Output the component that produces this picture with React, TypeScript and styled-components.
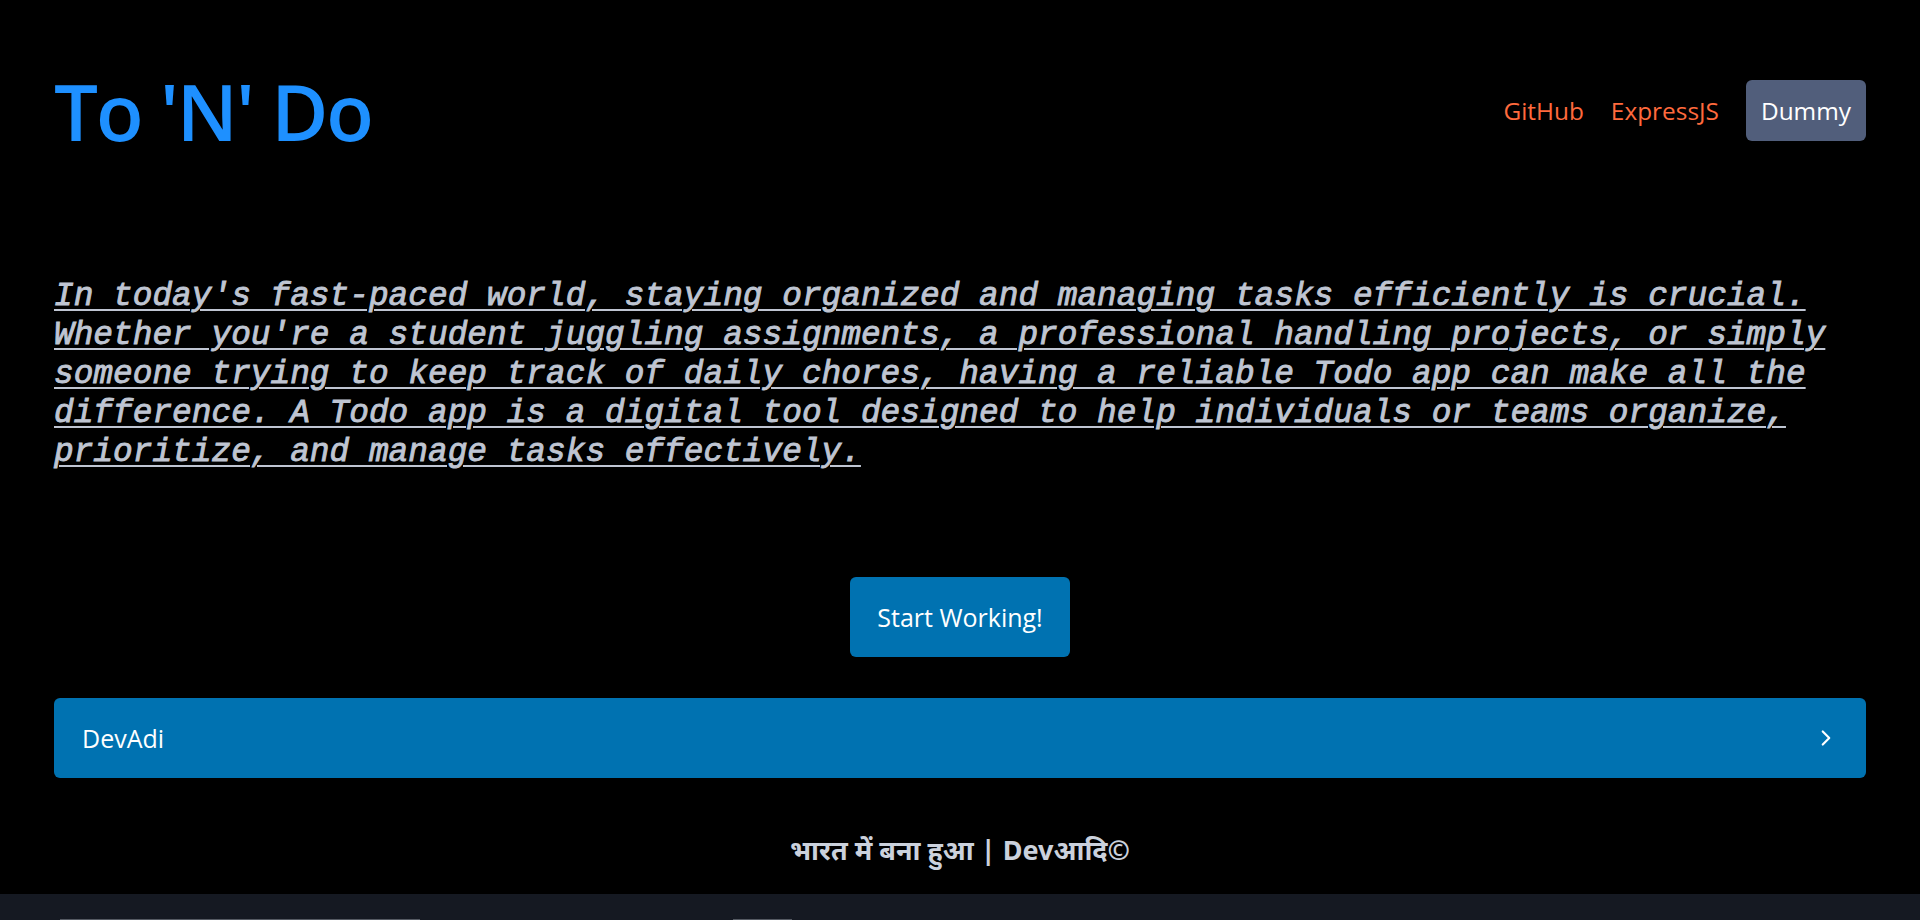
import React from 'react'
import styled, { createGlobalStyle } from 'styled-components'
import { ChevronRight } from 'lucide-react'

const GlobalStyle = createGlobalStyle`
    body{
        margin: 0;
        background: #000;
        font-family: "Open Sans", "Noto Sans", sans-serif;
    }
`

const Page = styled.div`
    padding: 0 54px;
`

const Header = styled.header`
    display: flex;
    justify-content: space-between;
    align-items: center;
    padding-top: 80px;
    height: 61px;
`

const Title = styled.h1`
    margin: 0;
    font-family: "Open Sans", sans-serif;
    font-weight: 600;
    font-size: 78px;
    line-height: 1;
    color: #1e90ff;
    letter-spacing: -2px;
`

const Nav = styled.nav`
    display: flex;
    align-items: center;
    gap: 27px;
`

const NavLink = styled.a`
    color: #ff6a3d;
    font-size: 24.4px;
    text-decoration: none;
`

const NavButton = styled.button`
    height: 61px;
    padding: 0 15px;
    border: none;
    border-radius: 6px;
    background: #515e7b;
    color: #fff;
    font-family: inherit;
    font-size: 24.4px;
`

const Intro = styled.p`
    margin: 136px 0 0;
    font-family: "Liberation Mono", "Courier New", monospace;
    font-style: italic;
    font-weight: 400;
    font-size: 32.8px;
    line-height: 39px;
    color: #bfc5d2;
    -webkit-text-stroke: 0.9px #bfc5d2;
    text-decoration: underline;
    text-decoration-thickness: 2px;
    text-underline-offset: 4px;
`

const ButtonRow = styled.div`
    display: flex;
    justify-content: center;
    margin-top: 105px;
`

const PrimaryButton = styled.button`
    height: 80px;
    padding: 0 27px;
    border: none;
    border-radius: 6px;
    background: #0072b1;
    color: #fff;
    font-family: inherit;
    font-size: 25px;
`

const Accordion = styled.div`
    display: flex;
    justify-content: space-between;
    align-items: center;
    margin-top: 41px;
    height: 80px;
    padding: 0 27px 0 28px;
    border-radius: 6px;
    background: #0072b1;
    color: #fff;
    font-size: 25px;
`

const Footer = styled.footer`
    height: 116px;
    box-sizing: border-box;
    padding-top: 53px;
    text-align: center;
    color: #cbd1dc;
    font-family: "Noto Sans", "Open Sans", sans-serif;
    font-weight: 700;
    font-size: 27px;
`

const Strip = styled.section`
    background: #151922;
    height: 26px;
    padding: 25px 0 0;
    display: flex;
    overflow: hidden;
    box-sizing: border-box;
`

const Ghost = styled.div<{ left: number; w: number }>`
    margin-left: ${p => p.left}px;
    width: ${p => p.w}px;
    height: 40px;
    border-top: 1px solid #555a63;
`

export default function App() {
  return (
    <>
      <GlobalStyle />
      <Page>
        <Header>
          <Title>To 'N' Do</Title>
          <Nav>
            <NavLink href="#">GitHub</NavLink>
            <NavLink href="#">ExpressJS</NavLink>
            <NavButton>Dummy</NavButton>
          </Nav>
        </Header>
        <Intro>
          In today's fast-paced world, staying organized and managing tasks efficiently is crucial.
          Whether you're a student juggling assignments, a professional handling projects, or simply
          someone trying to keep track of daily chores, having a reliable Todo app can make all the
          difference. A Todo app is a digital tool designed to help individuals or teams organize,
          prioritize, and manage tasks effectively.
        </Intro>
        <ButtonRow>
          <PrimaryButton>Start Working!</PrimaryButton>
        </ButtonRow>
        <Accordion>
          <span>DevAdi</span>
          <ChevronRight size={26} strokeWidth={2} />
        </Accordion>
        <Footer>भारत में बना हुआ | Devआदि©</Footer>
      </Page>
      <Strip>
        <Ghost left={60} w={360} />
        <Ghost left={313} w={59} />
      </Strip>
    </>
  )
}
